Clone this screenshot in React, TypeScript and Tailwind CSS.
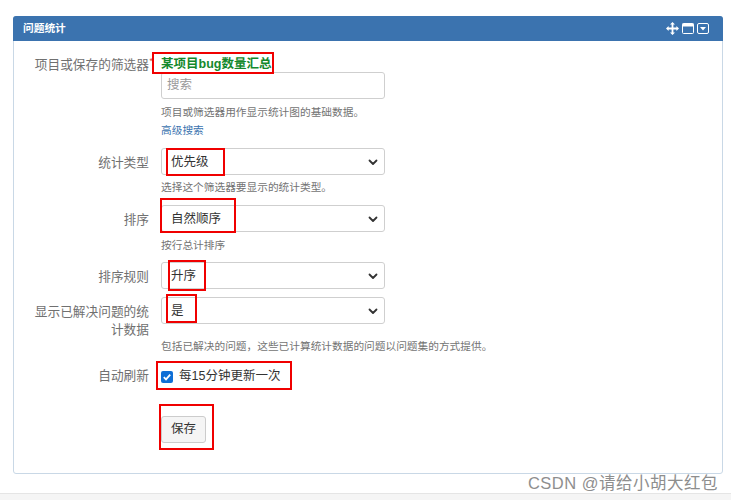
const font = "font-['Liberation_Sans','Noto_Sans_CJK_SC',sans-serif]";

function Row({ label, top, children }: { label: React.ReactNode; top?: string; children: React.ReactNode }) {
  return (
    <div className={`flex ${top ?? ""}`}>
      <div className="w-[135px] shrink-0 text-right text-[12.7px] leading-[18px] text-[#707070] pt-[6px]">{label}</div>
      <div className="ml-[12px] w-[224px] shrink-0">{children}</div>
    </div>
  );
}

function Help({ children, top }: { children: React.ReactNode; top: string }) {
  return <p className={`text-[10.7px] leading-[16px] text-[#737373] whitespace-nowrap ${top}`}>{children}</p>;
}

function FakeSelect({ value }: { value: string }) {
  return (
    <div className="h-[27px] w-[224px] rounded-[3px] border border-[#cfcfcf] bg-white flex items-center justify-between pl-[9px] pr-[3px] text-[12.5px] text-[#333]">
      <span className="pt-[2px]">{value}</span>
      <svg width="16" height="16" viewBox="0 0 16 16" fill="none" stroke="#333" strokeWidth="1.8" strokeLinecap="round" strokeLinejoin="round">
        <path d="M4.5 6.5L8 10l3.5-3.5" />
      </svg>
    </div>
  );
}

function RedBox({ className }: { className: string }) {
  return <div className={`absolute border-2 border-[#f00000] pointer-events-none ${className}`} />;
}

export default function App() {
  return (
    <div className={`relative h-[500px] w-[731px] overflow-hidden bg-white ${font}`}>
      <div className="pt-[16px] pl-[13px]">
        <div className="h-[458px] w-[710px] rounded-[3px] border border-[#c9d8e6] bg-white">
          <div className="-mx-px -mt-px flex h-[25px] items-center justify-between rounded-t-[3px] bg-[#3b73af] pl-[10px] pr-[14px]">
            <span className="text-[10.7px] font-bold text-white">问题统计</span>
            <div className="flex items-center gap-[3px]">
              <svg width="13" height="13" viewBox="0 0 13 13" fill="white">
                <path d="M6.5 0L9 2.6H7.4V5.6H10.4V4L13 6.5 10.4 9V7.4H7.4V10.4H9L6.5 13 4 10.4H5.6V7.4H2.6V9L0 6.5 2.6 4V5.6H5.6V2.6H4Z" />
              </svg>
              <svg width="12" height="11" viewBox="0 0 12 11" fill="none">
                <rect x="0.5" y="0.5" width="11" height="10" rx="1" stroke="white" />
                <rect x="0.5" y="0.5" width="11" height="3" fill="white" />
              </svg>
              <svg width="12" height="11" viewBox="0 0 12 11" fill="none">
                <rect x="0.5" y="0.5" width="11" height="10" rx="1.5" stroke="white" />
                <path d="M3 4h6L6 7.5Z" fill="white" />
              </svg>
            </div>
          </div>

          <div className="pt-[7px]">
            <Row label={<span className="relative top-[2px]">项目或保存的筛选器<span className="absolute -right-[4px] -top-[1px] text-[9px] leading-none text-[#d04437]">*</span></span>}>
              <div className="pt-[9px] text-[12.5px] font-bold leading-[15px] text-[#14892c] whitespace-nowrap">某项目bug数量汇总</div>
              <div className="flex h-[27px] items-center rounded-[3px] border border-[#cfcfcf] bg-white pl-[5px] text-[12.5px] text-[#9a9a9a]">搜索</div>
              <Help top="mt-[5px]">项目或筛选器用作显示统计图的基础数据。</Help>
              <a className="mt-[2px] block text-[10.7px] leading-[16px] text-[#3b73af]">高级搜索</a>
            </Row>

            <Row top="mt-[10px]" label="统计类型">
              <FakeSelect value="优先级" />
              <Help top="mt-[4px]">选择这个筛选器要显示的统计类型。</Help>
            </Row>

            <Row top="mt-[10px]" label="排序">
              <FakeSelect value="自然顺序" />
              <Help top="mt-[5px]">按行总计排序</Help>
            </Row>

            <Row top="mt-[9px]" label="排序规则">
              <FakeSelect value="升序" />
            </Row>

            <Row top="mt-[8px]" label={<span className="block ml-[20px]">显示已解决问题的统计数据</span>}>
              <FakeSelect value="是" />
              <Help top="mt-[14px]">包括已解决的问题，这些已计算统计数据的问题以问题集的方式提供。</Help>
            </Row>

            <Row top="mt-[7px]" label="自动刷新">
              <div className="flex h-[29px] items-center pt-[2px] whitespace-nowrap">
                <div className="flex h-[12px] w-[12px] items-center justify-center rounded-[2px] bg-[#0f6fd6]">
                  <svg width="10" height="10" viewBox="0 0 10 10" fill="none" stroke="white" strokeWidth="1.8">
                    <path d="M1.8 5.2l2.2 2.2 4.2-4.8" />
                  </svg>
                </div>
                <span className="ml-[6px] text-[12.5px] text-[#333]">每15分钟更新一次</span>
              </div>
            </Row>

            <div className="ml-[147px] mt-[26px]">
              <button className="h-[27px] w-[45px] rounded-[3px] border border-[#cccccc] bg-[#f5f5f5] text-[12.5px] text-[#333]">保存</button>
            </div>
          </div>
        </div>
      </div>

      <div className="absolute bottom-0 left-0 right-0 h-[7px] border-t border-[#e5e5e5] bg-[#f5f5f5]" />

      <RedBox className="left-[152px] top-[52px] h-[22px] w-[122px]" />
      <RedBox className="left-[166px] top-[148px] h-[28px] w-[59px]" />
      <RedBox className="left-[160px] top-[198px] h-[35px] w-[76px]" />
      <RedBox className="left-[168px] top-[260px] h-[31px] w-[38px]" />
      <RedBox className="left-[166px] top-[294px] h-[29px] w-[31px]" />
      <RedBox className="left-[156px] top-[361px] h-[29px] w-[136px]" />
      <RedBox className="left-[159px] top-[404px] h-[46px] w-[55px]" />

      <div className="absolute right-[13px] top-[473px] text-[16.5px] leading-[20px] text-[#8e8e8e] whitespace-nowrap tracking-[0.5px]">CSDN @请给小胡大红包</div>
    </div>
  );
}
